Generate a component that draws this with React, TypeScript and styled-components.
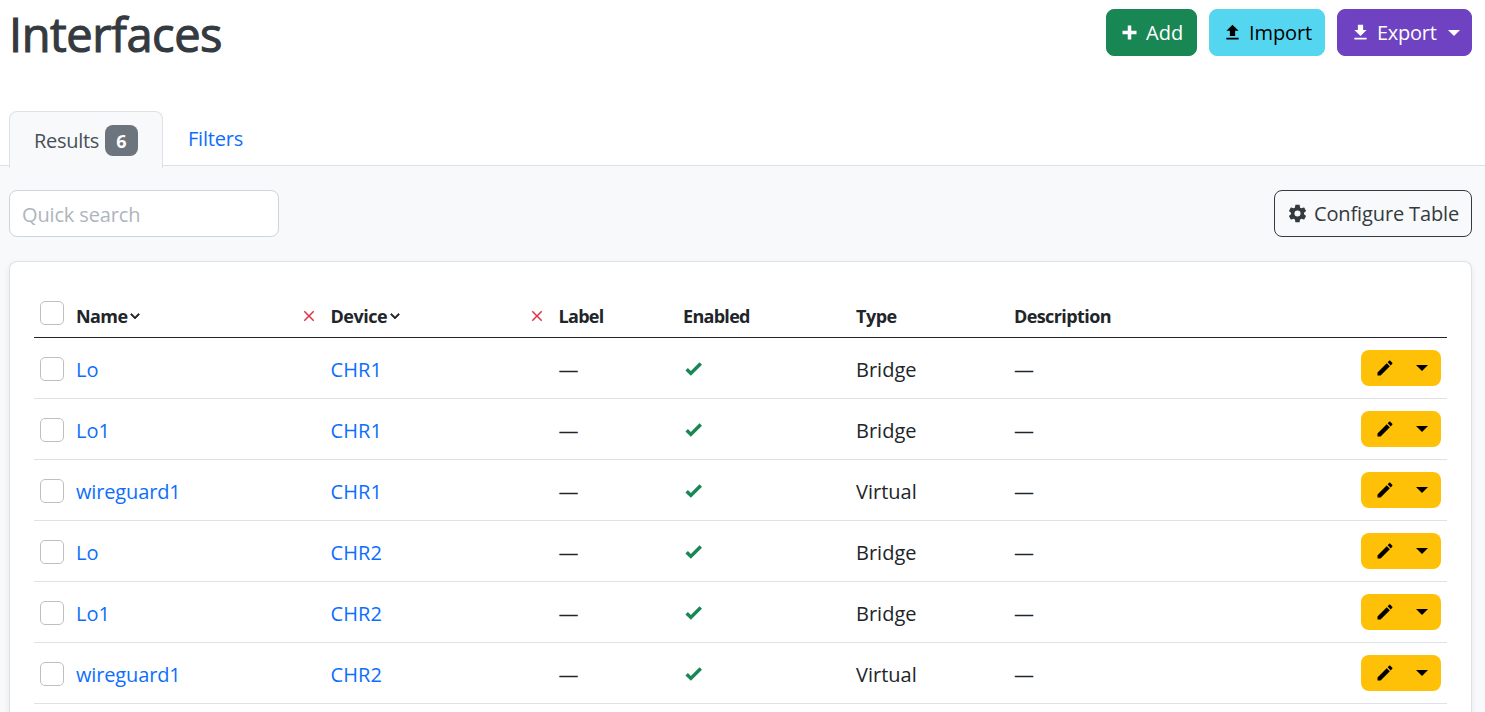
import React from "react";
import styled, { createGlobalStyle } from "styled-components";

const GlobalStyle = createGlobalStyle`
  * { box-sizing: border-box; }
  html, body { margin: 0; padding: 0; height: 712px; overflow: hidden; background: #fff; }
  body { font-family: "Open Sans", "Noto Sans", sans-serif; font-size: 20px; line-height: 30px; color: #212529; }
  button, input { font: inherit; }
`;

const paths = {
  plus: "M20 14H14V20H10V14H4V10H10V4H14V10H20V14Z",
  upload: "M9,16V10H5L12,3L19,10H15V16H9M5,20V18H19V20H5Z",
  download: "M5,20H19V18H5M19,9H15V3H9V9H5L12,16L19,9Z",
  cog: "M12,15.5A3.5,3.5 0 0,1 8.5,12A3.5,3.5 0 0,1 12,8.5A3.5,3.5 0 0,1 15.5,12A3.5,3.5 0 0,1 12,15.5M19.43,12.97C19.47,12.65 19.5,12.33 19.5,12C19.5,11.67 19.47,11.34 19.43,11L21.54,9.37C21.73,9.22 21.78,8.95 21.66,8.73L19.66,5.27C19.54,5.05 19.27,4.96 19.05,5.05L16.56,6.05C16.04,5.66 15.5,5.32 14.87,5.07L14.5,2.42C14.46,2.18 14.25,2 14,2H10C9.75,2 9.54,2.18 9.5,2.42L9.13,5.07C8.5,5.32 7.96,5.66 7.44,6.05L4.95,5.05C4.73,4.96 4.46,5.05 4.34,5.27L2.34,8.73C2.21,8.95 2.27,9.22 2.46,9.37L4.57,11C4.53,11.34 4.5,11.67 4.5,12C4.5,12.33 4.53,12.65 4.57,12.97L2.46,14.63C2.27,14.78 2.21,15.05 2.34,15.27L4.34,18.73C4.46,18.95 4.73,19.03 4.95,18.95L7.44,17.94C7.96,18.34 8.5,18.68 9.13,18.93L9.5,21.58C9.54,21.82 9.75,22 10,22H14C14.25,22 14.46,21.82 14.5,21.58L14.87,18.93C15.5,18.67 16.04,18.34 16.56,17.94L19.05,18.95C19.27,19.03 19.54,18.95 19.66,18.73L21.66,15.27C21.78,15.05 21.73,14.78 21.54,14.63L19.43,12.97Z",
  pencil: "M20.71,7.04C21.1,6.65 21.1,6 20.71,5.63L18.37,3.29C18,2.9 17.35,2.9 16.96,3.29L15.12,5.12L18.87,8.87M3,17.25V21H6.75L17.81,9.93L14.06,6.18L3,17.25Z",
  check: "M9,20.42L2.79,14.21L5.62,11.38L9,14.77L18.88,4.88L21.71,7.71L9,20.42Z",
  close: "M19,6.41L17.59,5L12,10.59L6.41,5L5,6.41L10.59,12L5,17.59L6.41,19L12,13.41L17.59,19L19,17.59L13.41,12L19,6.41Z",
  chevron: "M7.41,8.58L12,13.17L16.59,8.58L18,10L12,16L6,10L7.41,8.58Z",
};

const Svg = styled.svg`
  display: block;
  flex: none;
  fill: currentColor;
`;

function Icon({ name, size = 21 }: { name: keyof typeof paths; size?: number }) {
  return (
    <Svg width={size} height={size} viewBox="0 0 24 24">
      <path d={paths[name]} stroke={name === "chevron" ? "currentColor" : "none"} strokeWidth={0.9} />
    </Svg>
  );
}

const Text = styled.span<{ $track?: number }>`
  letter-spacing: ${(p) => p.$track ?? 0}px;
  white-space: nowrap;
`;

const Header = styled.header`
  display: flex;
  justify-content: space-between;
  align-items: flex-start;
  height: 111px;
  padding: 9px 13px 0 9px;
`;

const Title = styled.h1`
  margin: -4px 0 0;
  font-size: 47px;
  line-height: 58px;
  font-weight: 500;
  letter-spacing: -0.45px;
  color: #343a40;
  -webkit-text-stroke: 1.1px #343a40;
`;

const Actions = styled.div`
  display: flex;
  gap: 12px;
`;

const Button = styled.button<{ $bg: string; $fg: string; $width: number; $line?: string }>`
  display: flex;
  align-items: center;
  gap: 6px;
  width: ${(p) => p.$width}px;
  height: 47px;
  padding: 0 0 0 12px;
  border: 1px solid ${(p) => p.$line ?? p.$bg};
  border-radius: 8px;
  background: ${(p) => p.$bg};
  color: ${(p) => p.$fg};
`;

const Caret = styled.span`
  width: 0;
  height: 0;
  border: 6px solid transparent;
  border-top-color: currentColor;
  border-bottom: 0;
`;

const ExportCaret = styled(Caret)`
  margin-left: 5px;
`;

const Tabs = styled.nav`
  display: flex;
  height: 55px;
  padding-left: 9px;
  border-bottom: 1px solid #dee2e6;
`;

const ActiveTab = styled.div`
  display: flex;
  align-items: center;
  gap: 6px;
  width: 154px;
  height: 57px;
  padding: 1px 0 0 24px;
  border: 1px solid #dee2e6;
  border-bottom: 0;
  border-radius: 8px 8px 0 0;
  background: #f8f9fa;
  color: #495057;
`;

const Badge = styled.span`
  display: flex;
  align-items: center;
  justify-content: center;
  width: 33px;
  height: 31px;
  margin-top: -1px;
  padding-top: 2px;
  border-radius: 8px;
  background: #6c757d;
  color: #fff;
  font-size: 18px;
  font-weight: 700;
`;

const Tab = styled.a`
  padding: 13px 0 0 25px;
  color: #0d6efd;
`;

const Content = styled.main`
  height: 546px;
  padding: 24px 13px 0 9px;
  overflow: hidden;
  background: #f8f9fa;
`;

const Toolbar = styled.div`
  display: flex;
  justify-content: space-between;
  margin-bottom: 24px;
`;

const Search = styled.input`
  width: 270px;
  height: 47px;
  padding: 2px 12px 0;
  border: 1px solid #ced4da;
  border-radius: 8px;
  background: #fff;
  outline: 0;
  letter-spacing: -0.15px;
  &::placeholder { color: #adb5bd; opacity: 1; }
`;

const Card = styled.section`
  height: 451px;
  padding: 24px 24px 0;
  border: 1px solid #dfe0e1;
  border-bottom: 0;
  border-radius: 8px 8px 0 0;
  background: #fff;
  box-shadow: 0 3px 6px rgba(0, 0, 0, 0.075);
`;

const Row = styled.div`
  display: grid;
  grid-template-columns: 42px 254.5px 228px 124.5px 173px 158px 1fr 86px;
  align-items: center;
  height: 61px;
  border-bottom: 1px solid #dee2e6;
`;

const HeadRow = styled(Row)`
  height: 52px;
  border-bottom-color: #212529;
  font-size: 18px;
  font-weight: 700;
`;

const Cell = styled.div`
  padding-top: 3px;
`;

const HeadCell = styled.div`
  display: flex;
  align-items: center;
  padding-top: 8px;
`;

const Sort = styled.span`
  display: flex;
  margin-left: -1px;
`;

const Clear = styled.button`
  display: flex;
  margin: 0 12.5px 0 auto;
  padding: 0;
  border: 0;
  background: none;
  color: #dc3545;
`;

const Check = styled.input.attrs({ type: "checkbox" })`
  appearance: none;
  display: block;
  width: 24px;
  height: 24px;
  margin: 2px 0 0 6px;
  border: 1px solid #bfbfbf;
  border-radius: 5px;
  background: #fff;
`;

const HeadCheck = styled(Check)`
  margin-top: 3px;
`;

const Link = styled.a`
  color: #0d6efd;
`;

const Enabled = styled.span`
  display: flex;
  color: #198754;
`;

const RowButton = styled.button`
  display: flex;
  align-items: center;
  width: 80px;
  height: 36px;
  padding: 0 0 0 14px;
  border: 0;
  border-radius: 8px;
  background: #ffc107;
  color: #000;
`;

const RowCaret = styled(Caret)`
  margin-left: 21px;
`;

const rows = [
  ["Lo", "CHR1", "Bridge"],
  ["Lo1", "CHR1", "Bridge"],
  ["wireguard1", "CHR1", "Virtual"],
  ["Lo", "CHR2", "Bridge"],
  ["Lo1", "CHR2", "Bridge"],
  ["wireguard1", "CHR2", "Virtual"],
];

function SortHead({ label, track }: { label: string; track: number }) {
  return (
    <HeadCell>
      <Text $track={track}>{label}</Text>
      <Sort><Icon name="chevron" size={18} /></Sort>
      <Clear aria-label={`Clear ${label} sorting`}><Icon name="close" size={18} /></Clear>
    </HeadCell>
  );
}

export default function App() {
  return (
    <>
      <GlobalStyle />
      <Header>
        <Title>Interfaces</Title>
        <Actions>
          <Button $bg="#198754" $fg="#fff" $width={91}><Icon name="plus" /><Text>Add</Text></Button>
          <Button $bg="#54d6f0" $fg="#000" $width={116}><Icon name="upload" /><Text $track={-0.1}>Import</Text></Button>
          <Button $bg="#6f42c1" $fg="#fff" $width={135}><Icon name="download" /><Text $track={-0.25}>Export</Text><ExportCaret /></Button>
        </Actions>
      </Header>
      <Tabs>
        <ActiveTab><Text $track={-0.3}>Results</Text><Badge>6</Badge></ActiveTab>
        <Tab><Text $track={-0.2}>Filters</Text></Tab>
      </Tabs>
      <Content>
        <Toolbar>
          <Search placeholder="Quick search" />
          <Button $bg="transparent" $line="#343a40" $fg="#343a40" $width={198}>
            <Icon name="cog" /><Text $track={-0.13}>Configure Table</Text>
          </Button>
        </Toolbar>
        <Card>
          <HeadRow>
            <HeadCheck />
            <SortHead label="Name" track={-0.6} />
            <SortHead label="Device" track={-0.5} />
            <HeadCell><Text $track={-0.7}>Label</Text></HeadCell>
            <HeadCell><Text $track={-0.7}>Enabled</Text></HeadCell>
            <HeadCell><Text $track={-0.5}>Type</Text></HeadCell>
            <HeadCell><Text $track={-0.6}>Description</Text></HeadCell>
          </HeadRow>
          {rows.map(([name, device, type], i) => (
            <Row key={i}>
              <Check />
              <Cell><Link><Text $track={name.length > 3 ? -0.15 : 0}>{name}</Text></Link></Cell>
              <Cell><Link><Text $track={0.1}>{device}</Text></Link></Cell>
              <Cell><Text>—</Text></Cell>
              <Enabled><Icon name="check" /></Enabled>
              <Cell><Text>{type}</Text></Cell>
              <Cell><Text>—</Text></Cell>
              <RowButton aria-label="Edit"><Icon name="pencil" size={20} /><RowCaret /></RowButton>
            </Row>
          ))}
        </Card>
      </Content>
    </>
  );
}
